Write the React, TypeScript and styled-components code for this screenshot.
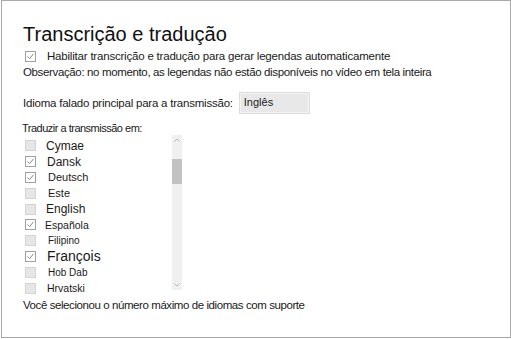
import styled, { createGlobalStyle } from "styled-components";

const Global = createGlobalStyle`
  html, body { margin: 0; padding: 0; background: #ffffff; }
  body { font-family: "Liberation Sans", Arial, sans-serif; color: #1a1a1a; }
`;

const Frame = styled.div`
  box-sizing: border-box;
  width: 510px;
  height: 338px;
  margin-left: 1px;
  border: 1px solid #a8a8a8;
  padding: 20px 0 0 21px;
  display: flex;
  flex-direction: column;
`;

const Title = styled.h1`
  margin: 0;
  font-size: 20px;
  font-weight: 400;
  line-height: 26px;
  color: #111;
`;

const CheckRow = styled.label`
  display: flex;
  align-items: center;
  height: 16px;
  margin-top: 1px;
  padding-left: 2px;
  font-size: 11.5px;
  letter-spacing: -0.2px;
`;

const Box = styled.span<{ $checked?: boolean }>`
  box-sizing: border-box;
  width: 11px;
  height: 11px;
  flex: none;
  border: 1px solid ${(p) => (p.$checked ? "#a0a0a0" : "#d4d4d4")};
  background: ${(p) => (p.$checked ? "#ffffff" : "#e6e6e6")};
  display: flex;
  align-items: center;
  justify-content: center;
`;

const Note = styled.p`
  margin: 0;
  font-size: 11.5px;
  line-height: 16px;
  letter-spacing: -0.36px;
`;

const LangRow = styled.div`
  display: flex;
  align-items: center;
  margin-top: 12px;
  font-size: 11.5px;
  letter-spacing: -0.22px;
`;

const Select = styled.div`
  box-sizing: border-box;
  margin-left: 6px;
  width: 71px;
  height: 22px;
  border: 1px solid #dcdcdc;
  background: #e8e8e8;
  padding: 3px 0 0 4px;
  font-size: 11px;
  letter-spacing: 0;
  box-shadow: inset 0 0 0 1px #f4f4f4;
`;

const SubHead = styled.div`
  margin-top: 7px;
  margin-left: -1px;
  font-size: 11px;
  line-height: 15px;
  letter-spacing: -0.5px;
`;

const ListWrap = styled.div`
  display: flex;
  margin-top: 2px;
`;

const List = styled.ul`
  list-style: none;
  margin: 0;
  padding: 0 0 0 2px;
  width: 147px;
`;

const Item = styled.li<{ $size: number; $indent: number }>`
  display: flex;
  align-items: center;
  height: 15.8px;
  font-size: ${(p) => p.$size}px;
  span + span {
    margin-left: ${(p) => p.$indent}px;
  }
`;

const Scroll = styled.div`
  width: 10px;
  height: 155px;
  margin-top: -3px;
  background: #f0f0f0;
  display: flex;
  flex-direction: column;
  align-items: center;
`;

const Arrow = styled.svg`
  flex: none;
  margin: 3px 0;
`;

const Thumb = styled.div`
  width: 10px;
  height: 25px;
  margin-top: 14px;
  background: #c2c2c2;
`;

const Spacer = styled.div`
  flex: 1;
`;

const Footer = styled.div`
  margin-top: 3px;
  font-size: 11.5px;
  letter-spacing: -0.42px;
`;

const Check = () => (
  <svg width="9" height="9" viewBox="0 0 9 9">
    <path d="M1.5 4.5 L3.6 6.6 L7.6 1.8" fill="none" stroke="#8a8a8a" strokeWidth="1" />
  </svg>
);

const languages: { name: string; checked: boolean; size: number; indent: number }[] = [
  { name: "Cymae", checked: false, size: 12, indent: 10 },
  { name: "Dansk", checked: true, size: 12, indent: 11 },
  { name: "Deutsch", checked: true, size: 11, indent: 12 },
  { name: "Este", checked: false, size: 11, indent: 12 },
  { name: "English", checked: false, size: 12, indent: 10 },
  { name: "Española", checked: true, size: 10.5, indent: 9 },
  { name: "Filipino", checked: false, size: 10, indent: 12 },
  { name: "François", checked: true, size: 14, indent: 11 },
  { name: "Hob Dab", checked: false, size: 10, indent: 12 },
  { name: "Hrvatski", checked: false, size: 10.5, indent: 11 },
];

export default function App() {
  return (
    <>
      <Global />
      <Frame>
        <Title>Transcrição e tradução</Title>
        <CheckRow>
          <Box $checked>
            <Check />
          </Box>
          <span style={{ marginLeft: 11 }}>
            Habilitar transcrição e tradução para gerar legendas automaticamente
          </span>
        </CheckRow>
        <Note>
          Observação: no momento, as legendas não estão disponíveis no vídeo em tela inteira
        </Note>
        <LangRow>
          Idioma falado principal para a transmissão:
          <Select>Inglês</Select>
        </LangRow>
        <SubHead>Traduzir a transmissão em:</SubHead>
        <ListWrap>
          <List>
            {languages.map((l) => (
              <Item key={l.name} $size={l.size} $indent={l.indent}>
                <Box $checked={l.checked}>{l.checked && <Check />}</Box>
                <span>{l.name}</span>
              </Item>
            ))}
          </List>
          <Scroll>
            <Arrow width="6" height="4" viewBox="0 0 6 4">
              <path d="M0.5 3.5 L3 1 L5.5 3.5" fill="none" stroke="#b8b8b8" strokeWidth="1" />
            </Arrow>
            <Thumb />
            <Spacer />
            <Arrow width="6" height="4" viewBox="0 0 6 4">
              <path d="M0.5 0.5 L3 3 L5.5 0.5" fill="none" stroke="#b8b8b8" strokeWidth="1" />
            </Arrow>
          </Scroll>
        </ListWrap>
        <Footer>Você selecionou o número máximo de idiomas com suporte</Footer>
      </Frame>
    </>
  );
}
